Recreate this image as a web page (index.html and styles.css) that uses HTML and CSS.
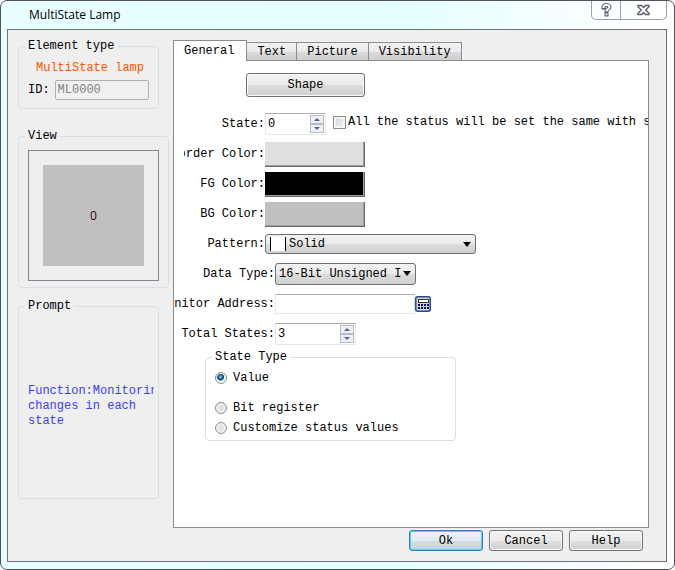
FILE: index.html
```html
<!DOCTYPE html>
<html lang="en">
<head>
<title>MultiState Lamp</title>
<meta charset="utf-8">
<meta name="viewport" content="width=device-width, initial-scale=1.0">
<link rel="stylesheet" href="styles.css">
</head>
<body>
<div class="window">
  <div class="titlebar">
    <h1>MultiState Lamp</h1>
    <div class="caption">
      <button type="button" class="cap-help" aria-label="What's this">
        <svg width="11" height="14" viewBox="0 0 11 14"><path d="M2.500 4.500V4a3 2 0 0 1 6 0c0 2-3 1.800-3 4M5.500 11.200v.3" fill="none" stroke="#5b5b6b" stroke-width="4" stroke-linecap="square"/><path d="M2.500 5V4a3 2 0 0 1 6 0c0 2-3 1.800-3 4.500M5.500 10.500v1.800" fill="none" stroke="#fff" stroke-width="2"/></svg>
      </button>
      <button type="button" class="cap-close" aria-label="Close">
        <svg width="13" height="12" viewBox="0 0 13 12"><path d="M1 1.5h3.6l1.9 2 1.9-2H12v1.2L8.7 6l3.3 3.3v1.2H8.4l-1.9-2-1.9 2H1V9.300L4.300 6 1 2.700z" fill="#fff" stroke="#5b5b6b" stroke-width="1.400"/></svg>
      </button>
    </div>
  </div>

  <form class="client">
    <!-- left column -->
    <div class="side">
      <fieldset class="group narrow element">
        <legend>Element type</legend>
        <p class="type-name">MultiState lamp</p>
        <div class="id-row">
          <label for="elem-id">ID:</label>
          <input type="text" id="elem-id" value="ML0000" disabled>
        </div>
      </fieldset>

      <fieldset class="group view">
        <legend>View</legend>
        <div class="preview"><div class="lamp">0</div></div>
      </fieldset>

      <fieldset class="group narrow prompt">
        <legend>Prompt</legend>
        <p>Function:Monitoring changes in each state</p>
      </fieldset>
    </div>

    <!-- right column -->
    <div class="main">
      <div class="tabs" role="tablist">
        <button type="button" role="tab" class="tab active" aria-selected="true">General</button>
        <button type="button" role="tab" class="tab">Text</button>
        <button type="button" role="tab" class="tab">Picture</button>
        <button type="button" role="tab" class="tab">Visibility</button>
      </div>

      <div class="panel" role="tabpanel">
        <button type="button" class="btn shape">Shape</button>

        <div class="row">
          <label class="name" for="state">State:</label>
          <div class="spin">
            <input type="text" id="state" value="0">
            <div class="arrows">
              <button type="button" aria-label="Up"><svg width="6" height="3"><path d="M0 3L3 0l3 3z"/></svg></button>
              <button type="button" aria-label="Down"><svg width="6" height="3"><path d="M0 0l3 3 3-3z"/></svg></button>
            </div>
          </div>
          <label class="check"><input type="checkbox"><span>All the status will be set the same with state 0</span></label>
        </div>
        <div class="row">
          <label class="name" for="border-color">Border Color:</label>
          <button type="button" id="border-color" class="color light"></button>
        </div>
        <div class="row">
          <label class="name" for="fg-color">FG Color:</label>
          <button type="button" id="fg-color" class="color black"></button>
        </div>
        <div class="row">
          <label class="name" for="bg-color">BG Color:</label>
          <button type="button" id="bg-color" class="color gray"></button>
        </div>
        <div class="row">
          <label class="name" for="pattern">Pattern:</label>
          <div class="combo pattern">
            <select id="pattern"><option>Solid</option></select>
            <span class="swatch"></span>
            <svg class="drop" width="8" height="5"><path d="M0 0h8L4 5z"/></svg>
          </div>
        </div>

        <div class="row wide">
          <label class="name" for="data-type">Data Type:</label>
          <div class="combo data-type">
            <select id="data-type"><option>16-Bit Unsigned Int</option></select>
            <svg class="drop" width="8" height="5"><path d="M0 0h8L4 5z"/></svg>
          </div>
        </div>
        <div class="row wide">
          <label class="name" for="address">Monitor Address:</label>
          <input type="text" id="address" class="address">
          <button type="button" class="calc" aria-label="Select address">
            <svg width="16" height="16" viewBox="0 0 16 16"><rect x=".75" y=".75" width="14.500" height="14.500" rx="2" fill="#d6d3ce" stroke="#1f5080" stroke-width="1.500"/><path d="M3 3h11v4H3z" fill="#333"/><path d="M4 4h9v2H4z" fill="#fff"/><path d="M3 8h2v2H3zM6 8h2v2H6zM9 8h2v2H9zM12 8h2v2h-2zM3 11h2v2H3zM6 11h2v2H6zM9 11h2v2H9zM12 11h2v2h-2z" fill="#00008b"/></svg>
          </button>
        </div>
        <div class="row wide">
          <label class="name" for="total">Total States:</label>
          <div class="spin total">
            <input type="text" id="total" value="3">
            <div class="arrows">
              <button type="button" aria-label="Up"><svg width="6" height="3"><path d="M0 3L3 0l3 3z"/></svg></button>
              <button type="button" aria-label="Down"><svg width="6" height="3"><path d="M0 0l3 3 3-3z"/></svg></button>
            </div>
          </div>
        </div>

        <fieldset class="group state-type">
          <legend>State Type</legend>
          <label class="radio first"><input type="radio" name="state-type" checked>Value</label>
          <label class="radio"><input type="radio" name="state-type">Bit register</label>
          <label class="radio"><input type="radio" name="state-type">Customize status values</label>
        </fieldset>
      </div>

      <div class="actions">
        <button type="submit" class="btn default">Ok</button>
        <button type="button" class="btn">Cancel</button>
        <button type="button" class="btn">Help</button>
      </div>
    </div>
  </form>
</div>
</body>
</html>
```
FILE: styles.css
```css
* { margin: 0; padding: 0; box-sizing: border-box; }
body { background: #fff; color: #000; font-family: "Liberation Mono", monospace; font-size: 12px; line-height: 16px; }
button, input, select { font: inherit; color: inherit; }

/* window frame */
.window { display: flex; flex-direction: column; min-height: 100vh; padding: 0 7px 7px 6px; border: 1px solid #50545a; border-radius: 7px; background: linear-gradient(90deg, #e8ffff 0, #e4ffff 60%, #fff 96%); overflow: hidden; }
.titlebar { display: flex; justify-content: space-between; height: 28px; }
.titlebar h1 { padding: 6px 0 0 22px; font-family: "Open Sans", sans-serif; font-size: 12px; font-weight: 400; }
.caption { display: flex; height: 19px; border: 1px solid #9aa3a8; border-top: 0; border-radius: 0 0 5px 5px; }
.caption button { display: flex; align-items: center; justify-content: center; border: 0; background: transparent; }
.cap-help { width: 28px; }
.caption .cap-close { width: 46px; border-left: 1px solid #9aa3a8; }
.client { display: flex; flex: 1; gap: 4px; padding: 8px 17px 10px 10px; border: 1px solid #6e7377; background: #efefef; }

/* group boxes */
.group { min-width: 0; border: 1px solid #d5dfe5; border-radius: 4px; }
.group legend { margin-left: -3px; padding: 0 3px; }
.side { display: flex; flex-direction: column; width: 151px; flex: none; }
.narrow { width: 141px; }
.element { height: 71px; padding: 6px 9px 0; }
.type-name { padding-left: 8px; color: #ff5500; white-space: nowrap; }
.id-row { display: flex; align-items: center; gap: 5px; margin-top: 4px; }
.id-row input { flex: 1; min-width: 0; height: 20px; padding: 0 2px; border: 1px solid #afafaf; border-radius: 2px; background: #f0f0f0; color: #838383; }
.view { height: 160px; margin-top: 19px; padding: 6px 9px 0; }
.preview { display: flex; width: 131px; height: 131px; padding: 14px; border: 1px solid #828790; }
.lamp { display: flex; flex: 1; align-items: center; justify-content: center; background: #c0c0c0; color: #200030; font-family: "Open Sans", sans-serif; }
.prompt { height: 201px; margin-top: 10px; padding: 70px 4px 0 9px; }
.prompt p { overflow: hidden; color: #3c3cff; line-height: 15px; }

/* tabs */
.main { display: flex; flex: 1; flex-direction: column; min-width: 0; padding-top: 2px; }
.tabs { display: flex; align-items: flex-end; height: 21px; }
.tab { height: 19px; padding: 0 10px; border: 1px solid #898c95; border-left: 0; background: linear-gradient(#f2f2f2, #ebebeb 50%, #dcdcdc 51%, #cfcfcf); text-align: center; }
.tab.active { z-index: 1; height: 21px; padding: 0 12px 0 10px; border-left: 1px solid #898c95; border-bottom: 0; background: #fff; }
.panel { flex: 1; margin-top: -1px; padding-top: 12px; border: 1px solid #898c95; background: #fff; overflow: hidden; }

/* buttons */
.btn { width: 74px; height: 21px; border: 1px solid #707070; border-radius: 3px; background: linear-gradient(#f2f2f2, #ebebeb 50%, #dddddd 51%, #cfcfcf); box-shadow: inset 0 0 0 1px #fafafa; }
.btn.shape { display: block; width: 119px; height: 24px; margin: 0 0 12px 72px; }
.btn.default { border-color: #3c7fb1; background: linear-gradient(#eef3f6, #e2eaee 50%, #d3dde4 51%, #c8d3dc); box-shadow: inset 0 0 0 1px #48d1fa; }
.actions { display: flex; justify-content: flex-end; gap: 6px; padding: 2px 6px 0 0; }

/* form rows */
.row { display: flex; align-items: center; height: 30px; }
.name { display: flex; flex: none; justify-content: flex-end; width: 81px; margin-left: 10px; overflow: hidden; white-space: nowrap; }
.wide .name { width: 101px; margin-left: 0; }
.spin { display: flex; flex: none; width: 61px; height: 22px; padding: 1px; border: 1px solid #e3e9ef; border-top-color: #abadb3; background: #fff; }
.spin.total { width: 81px; }
.spin input { flex: 1; min-width: 0; padding-left: 1px; border: 0; background: transparent; }
.arrows { display: flex; flex-direction: column; width: 14px; }
.arrows button { display: flex; flex: 1; align-items: center; justify-content: center; border: 1px solid #b8bcc2; background: #f0f0f0; fill: #4a63b5; }
.check { display: flex; align-items: center; gap: 2px; min-width: 0; margin: 0 0 4px 7px; }
.check span { flex: 1; min-width: 0; overflow: hidden; white-space: nowrap; }
.check input { appearance: none; flex: none; width: 13px; height: 13px; border: 1px solid #8e8f8f; background: linear-gradient(135deg, #cfd3d8, #f6f6f6); box-shadow: inset 0 0 0 2px #f4f4f4; }
.color { width: 100px; height: 25px; border: 0 solid #696969; border-width: 0 1px 1px 0; box-shadow: inset -1px -1px 0 #a0a0a0; }
.light { background: #dfdfdf; }
.black { background: #000; }
.gray { background: #c0c0c0; }
.combo { position: relative; height: 22px; }
.combo select { appearance: none; width: 100%; height: 100%; padding: 0 13px 0 3px; border: 1px solid #707070; border-radius: 3px; background: linear-gradient(#f2f2f2, #ebebeb 50%, #dddddd 51%, #cfcfcf); }
.drop { position: absolute; top: 8px; right: 5px; pointer-events: none; }
.pattern { width: 211px; height: 20px; }
.pattern select { padding-left: 23px; }
.swatch { position: absolute; top: 3px; left: 5px; width: 16px; height: 14px; border: 1px solid #000; border-width: 0 1px; background: #fff; }
.data-type { width: 141px; }
.address { width: 140px; height: 20px; padding: 0 2px; border: 1px solid #e3e9ef; border-top-color: #abadb3; }
.calc { display: flex; width: 16px; height: 16px; border: 0; background: transparent; }

.state-type { width: 251px; height: 92px; margin: 0 0 0 31px; padding: 3px 9px 0; }
.radio { display: flex; align-items: center; gap: 6px; height: 20px; }
.radio.first { margin-bottom: 10px; }
.radio input { appearance: none; width: 12px; height: 12px; border: 1px solid #8e8f8f; border-radius: 50%; background: radial-gradient(#dcdcdc 0, #ececec 60%); box-shadow: inset 0 0 0 1px #f4f4f4; }
.radio input:checked { background: radial-gradient(circle at 45% 40%, #7fd4f5 0, #1878ac 2px, #0b3657 3px, #f4f4f4 4px); }
```
